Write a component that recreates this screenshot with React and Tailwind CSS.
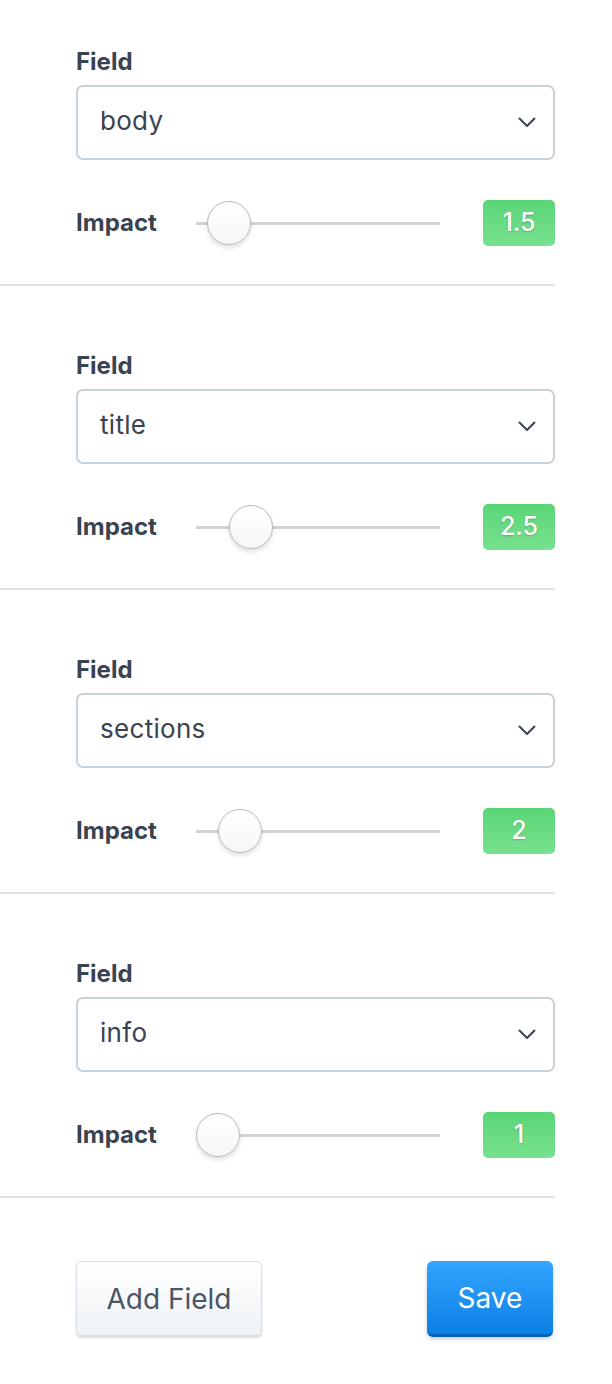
import React from "react";

const fields = [
  { name: "body", value: 1.5, label: "1.5" },
  { name: "title", value: 2.5, label: "2.5" },
  { name: "sections", value: 2, label: "2" },
  { name: "info", value: 1, label: "1" },
];

function Slider({ value }) {
  const min = 1;
  const max = 10;
  const left = ((value - min) / (max - min)) * 200;
  return (
    <div className="relative w-[244px] h-[46px] flex items-center">
      <div className="w-full h-[3px] bg-[#d2d2d2]" />
      <div
        className="absolute top-[1px] w-[44px] h-[44px] rounded-full border-[1.5px] border-[#b9b9b9] bg-gradient-to-b from-white to-[#f6f6f6] shadow-[0_3px_4px_rgba(0,0,0,0.12)]"
        style={{ left: `${left}px` }}
      />
    </div>
  );
}

function Section({ field, first }) {
  return (
    <div
      className={`${first ? "pt-[48px]" : "pt-[66px]"} pb-[38px] border-b-2 border-[#dfe3e8] w-[555px]`}
    >
      <div className="pl-[76px]">
        <div className="text-[24px] leading-[28px] font-bold text-[#3a4350] mb-[9px]">
          Field
        </div>
        <div className="w-[479px] h-[75px] border-2 border-[#c9d1da] rounded-[7px] bg-white flex items-center justify-between pl-[22px] pr-[17px]">
          <span className="text-[26px] leading-[30px] -mt-[3px] text-[#3a4350] tracking-[0.3px]">{field.name}</span>
          <svg width="18" height="11" viewBox="0 0 18 11" fill="none">
            <polyline
              points="1.5,1.5 9,9 16.5,1.5"
              stroke="#3a4350"
              strokeWidth="2"
              strokeLinecap="round"
              strokeLinejoin="round"
            />
          </svg>
        </div>
        <div className="mt-[40px] flex items-center justify-between w-[479px] h-[46px]">
          <div className="flex items-center">
            <span className="w-[120px] text-[24px] font-bold text-[#3a4350]">Impact</span>
            <Slider value={field.value} />
          </div>
          <div className="w-[72px] h-[46px] rounded-[5px] bg-gradient-to-b from-[#5ad576] to-[#78e18f] flex items-center justify-center text-white text-[25px] font-medium [text-shadow:0_1px_2px_rgba(0,0,0,0.2)]">
            {field.label}
          </div>
        </div>
      </div>
    </div>
  );
}

export default function App() {
  return (
    <div className="w-[612px] min-h-[1384px] bg-white font-['Inter','Liberation_Sans',sans-serif]">
      {fields.map((f, i) => (
        <Section key={f.name} field={f} first={i === 0} />
      ))}
      <div className="pl-[76px] pt-[63px] w-[555px] flex justify-between">
        <button className="w-[186px] h-[75px] rounded-[5px] border border-[#d9dee4] bg-gradient-to-b from-white to-[#eef2f6] shadow-[0_2px_2px_rgba(0,0,0,0.15)] text-[28px] text-[#4a5566]">
          Add Field
        </button>
        <button className="w-[126px] h-[76px] mr-[2px] rounded-[6px] bg-gradient-to-b from-[#31a5ff] to-[#0a7fe4] border-b-[3px] border-[#0062b8] shadow-[0_2px_4px_rgba(0,0,0,0.2)] text-[28px] text-white">
          Save
        </button>
      </div>
    </div>
  );
}
